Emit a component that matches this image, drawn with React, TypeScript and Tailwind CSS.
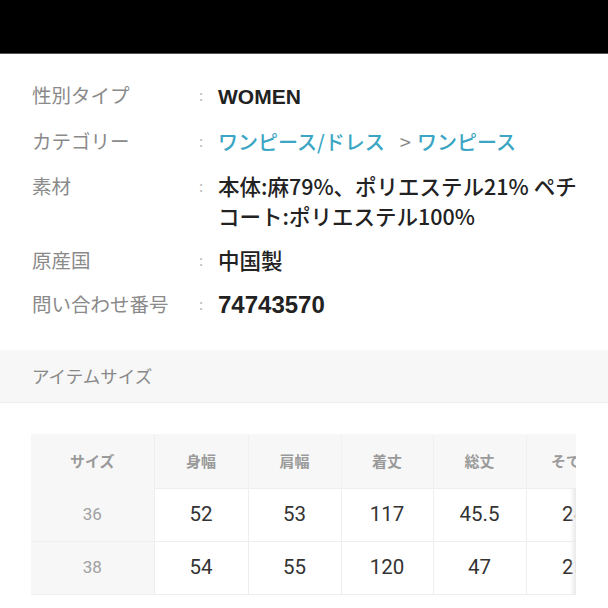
import React from "react";

const jp = "font-['Noto_Sans_CJK_JP','Noto_Sans',sans-serif]";

const specs = [
  { label: "性別タイプ", value: <span className="font-['Liberation_Sans','Noto_Sans_CJK_JP',sans-serif] font-semibold text-[21px]">WOMEN</span> },
  {
    label: "カテゴリー",
    value: (
      <span className="text-[#3ba6c4] text-[20px]">
        ワンピース/ドレス<span className="ml-[15px] mr-[6px] text-[#888] font-normal">&gt;</span>ワンピース
      </span>
    ),
  },
  {
    label: "素材",
    value: (
      <>
        本体:麻79%、ポリエステル21% ペチ
        <br />
        コート:ポリエステル100%
      </>
    ),
  },
  { label: "原産国", value: "中国製" },
  { label: "問い合わせ番号", value: <span className="font-['Liberation_Sans',sans-serif] font-semibold text-[24px]">74743570</span> },
];

const heads = ["サイズ", "身幅", "肩幅", "着丈", "総丈", "そで丈"];
const rows = [
  ["36", "52", "53", "117", "45.5", "24"],
  ["38", "54", "55", "120", "47", "25"],
];

export default function App() {
  return (
    <div className={`w-[608px] h-[608px] overflow-hidden bg-white ${jp}`}>
      <div className="h-[54px] bg-black border-b border-[#555]" />

      <div className="flex flex-col gap-[14px] pt-[26px] pl-[32px]">
        {specs.map((s, i) => (
          <div key={i} className="flex items-start">
            <div className="w-[167px] shrink-0 h-[30px] leading-[30px] text-[19.5px] text-[#8a8a8a]">{s.label}</div>
            <div className="w-[19px] shrink-0 h-[30px] leading-[30px] text-[#bbb] text-[15px]">:</div>
            <div className="font-medium leading-[30px] text-[21.5px] text-[#222] whitespace-nowrap [&>span]:leading-[30px]">
              {s.value}
            </div>
          </div>
        ))}
      </div>

      <div className="mt-[30px] h-[53px] bg-[#f7f7f7] border-b border-[#eee] flex items-center pl-[32px] text-[17.5px] text-[#888]">
        アイテムサイズ
      </div>

      <div className="relative mt-[31px] ml-[31px] w-[545px] overflow-hidden">
        <table className="border-collapse table-fixed w-[590px]">
          <colgroup>
            <col className="w-[123px]" />
            <col className="w-[94px]" />
            <col className="w-[93px]" />
            <col className="w-[92px]" />
            <col className="w-[93px]" />
            <col className="w-[95px]" />
          </colgroup>
          <thead>
            <tr className="h-[54px] bg-[#f7f7f7]">
              {heads.map((h, i) => (
                <th
                  key={h}
                  className={`font-semibold text-[15px] text-[#9a9a9a] text-center whitespace-nowrap ${i === 0 ? "border-r border-[#eee]" : "border-r border-[#f0f0f0]"}`}
                >
                  {h}
                </th>
              ))}
            </tr>
          </thead>
          <tbody>
            {rows.map((r, ri) => (
              <tr key={ri} className="h-[53px]">
                {r.map((c, ci) =>
                  ci === 0 ? (
                    <td
                      key={ci}
                      className="bg-[#f7f7f7] text-center text-[17px] text-[#a0a0a0] border-b border-[#efefef] font-['Roboto',sans-serif]"
                    >
                      {c}
                    </td>
                  ) : (
                    <td
                      key={ci}
                      className="text-center text-[20.5px] text-[#333] border border-[#eeeeee] font-['Roboto',sans-serif]"
                    >
                      {c}
                    </td>
                  )
                )}
              </tr>
            ))}
          </tbody>
        </table>
        <div className="absolute right-0 top-[54px] bottom-0 w-[6px] bg-gradient-to-r from-transparent to-[#e9e9e9]" />
      </div>
    </div>
  );
}
